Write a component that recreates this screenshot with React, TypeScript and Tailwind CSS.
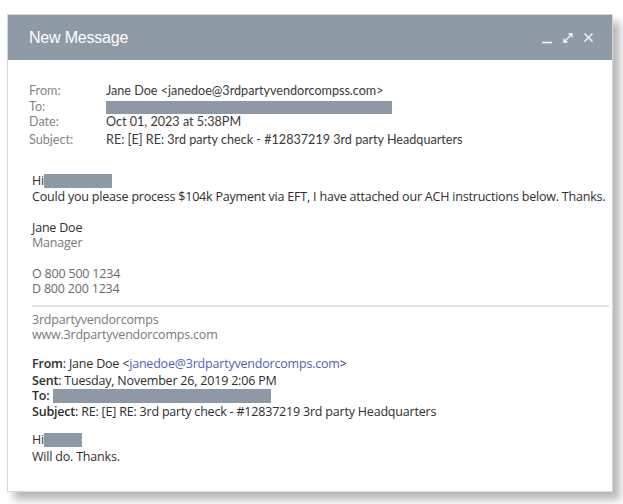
import { ReactNode } from "react";

const Redact = ({ w, h = 14 }: { w: number; h?: number }) => (
  <span className="inline-block align-middle bg-[#8e99a6]" style={{ width: w, height: h }} />
);

function HeaderRow({ label, children }: { label: string; children: ReactNode }) {
  return (
    <div className="flex h-[15.5px] items-center">
      <span className="w-[77px] text-[#858585]">{label}</span>
      <span className="text-[#3a3a3a]">{children}</span>
    </div>
  );
}

export default function App() {
  return (
    <div className="w-[623px] h-[504px] bg-white pt-[14px] pl-[7px]">
      <div className="w-[606px] h-[478px] bg-white border border-[#d8d8d8] shadow-[7px_8px_8px_rgba(0,0,0,0.28)] flex flex-col">
        {/* title bar */}
        <div className="h-[45px] bg-[#8f9aa7] flex items-center justify-between pl-[21px] pr-[18px]">
          <span className="text-white text-[16px] font-['Liberation_Sans',sans-serif] tracking-[-0.2px]">New Message</span>
          <div className="flex items-center gap-[9px] text-white/90">
            <svg width="12" height="12" viewBox="0 0 12 12"><path d="M1 10.5h10" stroke="currentColor" strokeWidth="1.6" /></svg>
            <svg width="12" height="12" viewBox="0 0 12 12" fill="none" stroke="currentColor" strokeWidth="1.3">
              <path d="M2 10L10 2" />
              <path d="M6.5 2H10V5.5" />
              <path d="M2 6.5V10H5.5" />
            </svg>
            <svg width="11" height="11" viewBox="0 0 11 11" stroke="currentColor" strokeWidth="1.4"><path d="M1.5 1.5l8 8M9.5 1.5l-8 8" /></svg>
          </div>
        </div>

        {/* original headers */}
        <div className="pt-[24px] pl-[21px] text-[12.6px] font-['Lato',sans-serif]">
          <HeaderRow label="From:">Jane Doe &lt;janedoe@3rdpartyvendorcompss.com&gt;</HeaderRow>
          <HeaderRow label="To:"><Redact w={286} h={13} /></HeaderRow>
          <HeaderRow label="Date:">Oct 01, 2023 at 5:38PM</HeaderRow>
          <div className="h-[2px]" />
          <HeaderRow label="Subject:">RE: [E] RE: 3rd party check - #12837219 3rd party Headquarters</HeaderRow>
        </div>

        {/* body */}
        <div className="pt-[25px] pl-[24px] pr-[3px] text-[12.5px] leading-[15.5px] text-[#2e2e2e] font-['Open_Sans',sans-serif] tracking-[-0.2px]">
          <div className="flex items-center h-[16px]">Hi <Redact w={68} /></div>
          <div>Could you please process $104k Payment via EFT, I have attached our ACH instructions below. Thanks.</div>

          <div className="mt-[15px]">Jane Doe</div>
          <div className="text-[#7a7a7a]">Manager</div>

          <div className="mt-[15px] text-[#6a6a6a]">O 800 500 1234</div>
          <div className="text-[#6a6a6a]">D 800 200 1234</div>

          <div className="mt-[8px] h-[2px] bg-[#e2e2e2]" />

          <div className="mt-[5px] text-[#7a7a7a]">3rdpartyvendorcomps</div>
          <div className="text-[#7a7a7a]">www.3rdpartyvendorcomps.com</div>

          <div className="mt-[13px] leading-[16px]">
            <div><b className="font-semibold">From</b>: Jane Doe &lt;<span className="text-[#4f5fc0]">janedoe@3rdpartyvendorcomps.com</span>&gt;</div>
            <div className="mt-[1px]"><b className="font-semibold">Sent</b>: Tuesday, November 26, 2019 2:06 PM</div>
            <div className="flex items-center h-[15px]"><b className="font-semibold mr-[3px]">To:</b><Redact w={218} /></div>
            <div><b className="font-semibold">Subject</b>: RE: [E] RE: 3rd party check - #12837219 3rd party Headquarters</div>

            <div className="mt-[12px] flex items-center h-[16px]">Hi <Redact w={38} /></div>
            <div className="mt-[1px]">Will do. Thanks.</div>
          </div>
        </div>
      </div>
    </div>
  );
}
